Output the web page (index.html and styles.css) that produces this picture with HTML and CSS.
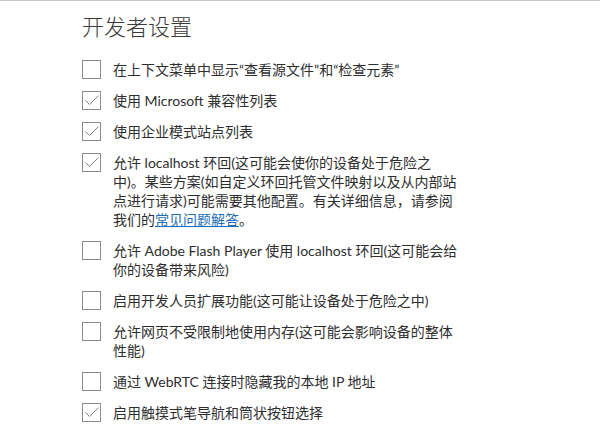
FILE: index.html
```html
<!DOCTYPE html>
<html lang="zh-CN">
<head>
<meta charset="utf-8">
<title>开发者设置</title>
<link rel="stylesheet" href="styles.css">
</head>
<body>
<div class="topline"></div>
<main class="panel">
  <h1 class="title">开发者设置</h1>
  <ul class="options">
    <li class="option">
      <span class="box"></span>
      <span class="label">在上下文菜单中显示“查看源文件”和“检查元素”</span>
    </li>
    <li class="option">
      <span class="box checked"><svg viewBox="0 0 17 17"><path d="M2.5 8.5 L6.5 12.5 L15.5 3.5"/></svg></span>
      <span class="label">使用 Microsoft 兼容性列表</span>
    </li>
    <li class="option">
      <span class="box checked"><svg viewBox="0 0 17 17"><path d="M2.5 8.5 L6.5 12.5 L15.5 3.5"/></svg></span>
      <span class="label">使用企业模式站点列表</span>
    </li>
    <li class="option">
      <span class="box checked"><svg viewBox="0 0 17 17"><path d="M2.5 8.5 L6.5 12.5 L15.5 3.5"/></svg></span>
      <span class="label">允许 localhost 环回(这可能会使你的设备处于危险之中)。某些方案(如自定义环回托管文件映射以及从内部站点进行请求)可能需要其他配置。有关详细信息，请参阅我们的<a class="link" href="#">常见问题解答</a>。</span>
    </li>
    <li class="option">
      <span class="box"></span>
      <span class="label">允许 Adobe Flash Player 使用 localhost 环回(这可能会给你的设备带来风险)</span>
    </li>
    <li class="option">
      <span class="box"></span>
      <span class="label">启用开发人员扩展功能(这可能让设备处于危险之中)</span>
    </li>
    <li class="option">
      <span class="box"></span>
      <span class="label">允许网页不受限制地使用内存(这可能会影响设备的整体性能)</span>
    </li>
    <li class="option">
      <span class="box"></span>
      <span class="label">通过 WebRTC 连接时隐藏我的本地 IP 地址</span>
    </li>
    <li class="option">
      <span class="box checked"><svg viewBox="0 0 17 17"><path d="M2.5 8.5 L6.5 12.5 L15.5 3.5"/></svg></span>
      <span class="label">启用触摸式笔导航和筒状按钮选择</span>
    </li>
  </ul>
</main>
</body>
</html>
```

FILE: styles.css
```css
html, body {
  margin: 0;
  padding: 0;
  background: #ffffff;
}

body {
  font-family: "Lato", "Noto Sans CJK SC", sans-serif;
  color: #2e2e2e;
  width: 600px;
  height: 436px;
  overflow: hidden;
}

.topline {
  height: 1px;
  background: #c6c6c6;
}

.panel {
  padding-left: 82px;
  width: 380px;
}

.title {
  margin: 0;
  padding-top: 10px;
  font-size: 22px;
  line-height: 28px;
  font-weight: 300;
  color: #3a3a3a;
  font-family: "Noto Sans CJK SC", sans-serif;
}

.options {
  list-style: none;
  margin: 21px 0 0;
  padding: 0;
  display: flex;
  flex-direction: column;
  gap: 12px;
}

.option {
  display: flex;
  align-items: flex-start;
  gap: 12px;
}

.box {
  flex: none;
  width: 17px;
  height: 17px;
  border: 1px solid #8c8c8c;
  display: flex;
}

.box svg {
  width: 17px;
  height: 17px;
}

.box svg path {
  fill: none;
  stroke: #808080;
  stroke-width: 1;
}

.label {
  font-size: 14px;
  line-height: 19px;
  width: 348px;
}

.link {
  color: #1c6fb8;
  text-decoration: underline;
}
```
